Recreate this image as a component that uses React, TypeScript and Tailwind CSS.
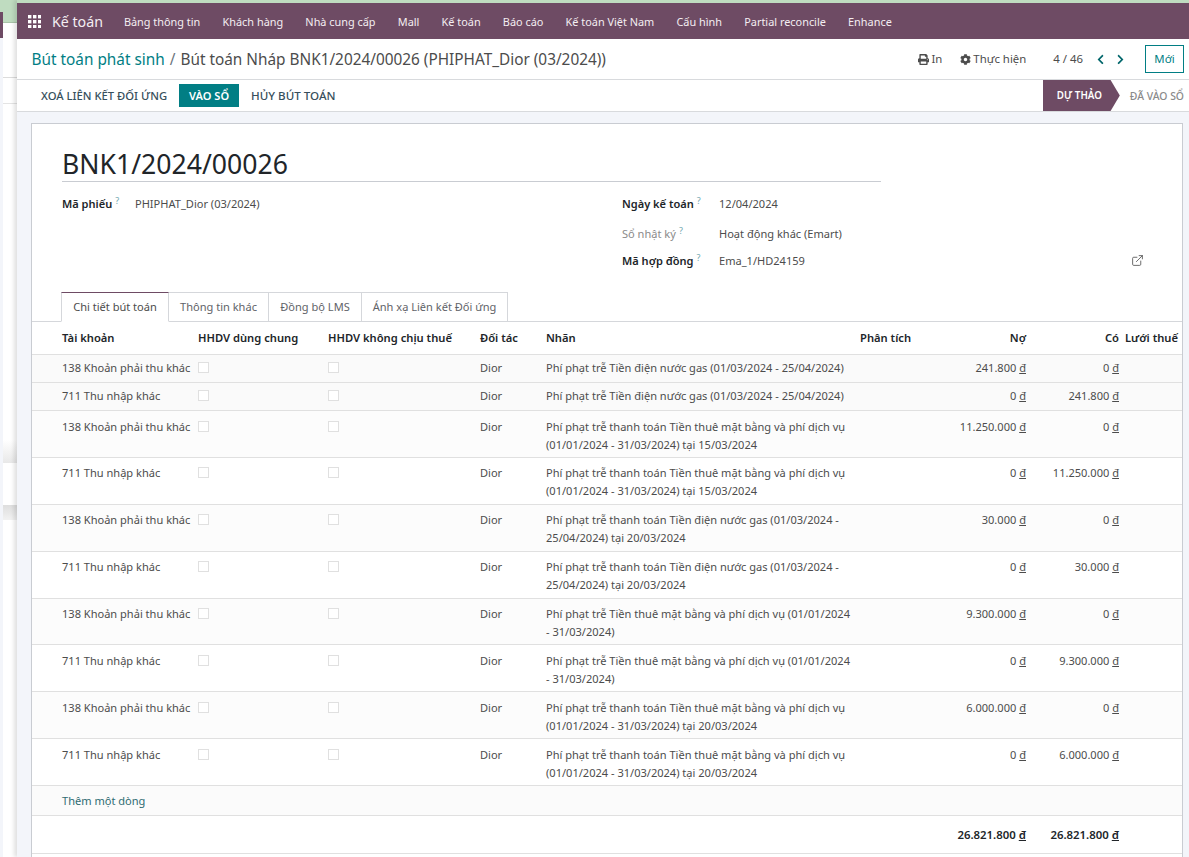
import React from "react";
import { FaPrint, FaCog, FaChevronLeft, FaChevronRight } from "react-icons/fa";
import { ExternalLink } from "lucide-react";

const A = "138 Khoản phải thu khác";
const B = "711 Thu nhập khác";
const L1 = "Phí phạt trễ Tiền điện nước gas (01/03/2024 - 25/04/2024)";
const L2 = "Phí phạt trễ thanh toán Tiền thuê mặt bằng và phí dịch vụ (01/01/2024 - 31/03/2024) tại 15/03/2024";
const L3 = "Phí phạt trễ thanh toán Tiền điện nước gas (01/03/2024 - 25/04/2024) tại 20/03/2024";
const L4 = "Phí phạt trễ Tiền thuê mặt bằng và phí dịch vụ (01/01/2024 - 31/03/2024)";
const L5 = "Phí phạt trễ thanh toán Tiền thuê mặt bằng và phí dịch vụ (01/01/2024 - 31/03/2024) tại 20/03/2024";

const rows: [string, string, string, string][] = [
  [A, L1, "241.800", "0"],
  [B, L1, "0", "241.800"],
  [A, L2, "11.250.000", "0"],
  [B, L2, "0", "11.250.000"],
  [A, L3, "30.000", "0"],
  [B, L3, "0", "30.000"],
  [A, L4, "9.300.000", "0"],
  [B, L4, "0", "9.300.000"],
  [A, L5, "6.000.000", "0"],
  [B, L5, "0", "6.000.000"],
];

const nav = ["Bảng thông tin", "Khách hàng", "Nhà cung cấp", "Mall", "Kế toán", "Báo cáo", "Kế toán Việt Nam", "Cấu hình", "Partial reconcile", "Enhance"];
const tabs: [string, string][] = [
  ["Thông tin khác", "w-[100px]"],
  ["Đồng bộ LMS", "w-[93px]"],
  ["Ánh xạ Liên kết Đối ứng", "w-[146px]"],
];

const Money = ({ v }: { v: string }) => (
  <span>
    {v} <span className="underline">đ</span>
  </span>
);

const Box = () => <span className="block w-[11px] h-[11px] border border-[#e0e0e0] bg-white mt-[3px]" />;

const Field = ({ label, value, muted, w }: { label: string; value: string; muted?: boolean; w: string }) => (
  <div className="flex items-start">
    <div className={`${w} shrink-0 ${muted ? "text-[#8a8a8a]" : "font-semibold text-[#212529]"}`}>
      {label}
      <sup className="text-[#71a7b0] font-normal ml-[3px] text-[9px]">?</sup>
    </div>
    <div className="text-[#4c4c4c]">{value}</div>
  </div>
);

export default function App() {
  return (
    <div className="flex h-[857px] w-[1189px] overflow-hidden bg-white text-[11.05px] leading-[18px] text-[#4c4c4c] font-['Noto_Sans','Open_Sans',sans-serif]">
      <div className="w-[17px] shrink-0 flex">
        <div className="w-[3px] flex flex-col bg-[#f3f5fa]">
          <div className="h-[12px] bg-[#bfdcc0]" />
          <div className="h-[26px] bg-[#6e4b64]" />
        </div>
        <div className="w-[14px] flex flex-col bg-white">
          <div className="h-[23px] bg-[#bfdcc0] border-b border-[#a9c4a9]" />
          <div className="h-[55px] border-b border-[#dcdcdc]" />
          <div className="h-[26px] border-b border-[#e4e4e4]" />
          <div className="h-[336px]" />
          <div className="h-[23px] bg-linear-to-b from-white to-[#e8e8e8]" />
          <div className="h-[42px]" />
          <div className="h-[15px] bg-linear-to-b from-[#dedede] to-[#f2f2f2]" />
        </div>
      </div>
      <div className="relative flex-1 min-w-0 flex flex-col shadow-[-3px_0_4px_rgba(0,0,0,0.12)]">
        <div className="h-[3px] shrink-0 bg-[#bfdcc0]" />
        <header className="h-[36px] bg-[#6e4b64] text-white flex items-center shrink-0">
          <svg className="ml-[11px]" width="13" height="13" viewBox="0 0 13 13" fill="#fff">
            {[0, 5, 10].flatMap((x) => [0, 5, 10].map((y) => <rect key={`${x}-${y}`} x={x} y={y} width="3.4" height="3.4" />))}
          </svg>
          <span className="ml-[11px] mt-[1px] text-[14.2px] text-[#f4eef2]">Kế toán</span>
          <nav className="flex gap-[22.2px] ml-[21px] mt-[1px] text-[#f4eef2] text-[10.9px]">
            {nav.map((n) => (
              <span key={n}>{n}</span>
            ))}
          </nav>
        </header>
        <div className="h-[41px] shrink-0 border-b border-[#d8dadd] flex items-center bg-white text-[11.4px]">
          <div className="ml-[14.5px] flex-1 text-[15.35px] text-[#4c4c4c]">
            <span className="text-[#017e84]">Bút toán phát sinh</span>
            <span className="mx-[5px] text-[#6c757d]">/</span>
            <span>Bút toán Nháp BNK1/2024/00026 (PHIPHAT_Dior (03/2024))</span>
          </div>
          <span className="flex items-center gap-[2px]">
            <FaPrint size={11} />
            In
          </span>
          <span className="flex items-center gap-[2px] ml-[18px]">
            <FaCog size={11} />
            Thực hiện
          </span>
          <span className="ml-[27px]">4 / 46</span>
          <FaChevronLeft className="ml-[12px] text-[#01666b]" size={11} />
          <FaChevronRight className="ml-[9px] text-[#01666b]" size={11} />
          <span className="ml-[19px] mr-[5px] w-[39px] h-[28px] border border-[#017e84] text-[#017e84] flex items-center justify-center">Mới</span>
        </div>
        <div className="h-[32px] shrink-0 border-b border-[#d8dadd] flex items-center bg-white pl-[24px] font-medium">
          <span className="text-[#374f5c] text-[11.25px]">XOÁ LIÊN KẾT ĐỐI ỨNG</span>
          <span className="ml-[12px] h-[23px] w-[60px] justify-center bg-[#017e84] text-white flex items-center font-semibold">VÀO SỔ</span>
          <span className="ml-[12px] text-[#374f5c] text-[11.6px]">HỦY BÚT TOÁN</span>
          <div className="ml-auto flex items-center h-[31px] text-[10.4px]">
            <span className="h-full w-[77px] pl-[14px] bg-[#6e4b64] text-white font-semibold text-[9.8px] flex items-center [clip-path:polygon(0_0,88%_0,100%_50%,88%_100%,0_100%)]">
              DỰ THẢO
            </span>
            <span className="ml-[10px] pr-[5px] text-[#8a8a8a]">ĐÃ VÀO SỔ</span>
          </div>
        </div>
        <main className="flex-1 min-h-0 bg-[#f3f5fa] pl-[14px] pr-[6px] pt-[11px]">
          <div className="bg-white border border-[#c9ccd2] h-[745px]">
            <div className="pl-[30px] pt-[21px]">
              <div className="w-[819px] h-[37px] border-b border-[#c9ccd2] text-[26.6px] leading-[38px] text-[#212529]">BNK1/2024/00026</div>
            </div>
            <div className="flex pl-[30px] pt-[13px] h-[110px]">
              <div className="w-[560px]">
                <Field label="Mã phiếu" value="PHIPHAT_Dior (03/2024)" w="w-[73px]" />
              </div>
              <div className="flex-1 flex flex-col pr-[38px]">
                <Field label="Ngày kế toán" value="12/04/2024" w="w-[97px]" />
                <div className="mt-[12px]">
                  <Field label="Sổ nhật ký" value="Hoạt động khác (Emart)" muted w="w-[97px]" />
                </div>
                <div className="mt-[9px] relative">
                  <Field label="Mã hợp đồng" value="Ema_1/HD24159" w="w-[97px]" />
                  <ExternalLink className="absolute right-0 top-[2px]" size={13} strokeWidth={1.5} />
                </div>
              </div>
            </div>
            <div className="flex pl-[29px] h-[30px] border-b border-[#d5d7db]">
              <span className="h-[30px] w-[108px] justify-center flex items-center bg-white border border-[#d5d7db] border-b-white border-t-[#6e4b64]">Chi tiết bút toán</span>
              {tabs.map(([t, w]) => (
                <span key={t} className={`${w} h-[29px] justify-center flex items-center border-t border-r border-[#d5d7db] text-[#5f6368]`}>
                  {t}
                </span>
              ))}
            </div>
            <table className="w-full table-fixed border-collapse">
              <colgroup>
                <col className="w-[166px]" />
                <col className="w-[130px]" />
                <col className="w-[152px]" />
                <col className="w-[66px]" />
                <col className="w-[314px]" />
                <col className="w-[72px]" />
                <col className="w-[94px]" />
                <col className="w-[93px]" />
                <col />
              </colgroup>
              <thead>
                <tr className="h-[32px] font-semibold text-[#212529] border-b border-[#e0e0e0] text-[11.2px]">
                  <th className="pl-[30px] text-left font-semibold">Tài khoản</th>
                  <th className="text-left font-semibold">HHDV dùng chung</th>
                  <th className="text-left font-semibold">HHDV không chịu thuế</th>
                  <th className="text-left font-semibold">Đối tác</th>
                  <th className="text-left font-semibold">Nhãn</th>
                  <th className="text-left font-semibold">Phân tích</th>
                  <th className="text-right font-semibold">Nợ</th>
                  <th className="text-right font-semibold">Có</th>
                  <th className="text-right font-semibold pr-[4px] whitespace-nowrap">Lưới thuế</th>
                </tr>
              </thead>
              <tbody>
                {rows.map(([acc, label, debit, credit], i) => {
                  const pad = i < 2 ? "pt-[4.5px] pb-[4.75px]" : "pt-[6.5px] pb-[3.4px]";
                  return (
                    <tr key={i} className={`border-b border-[#e0e0e0] align-top ${i < 2 ? "bg-[#fafafa]" : i % 2 === 0 ? "bg-[#fcfcfc]" : "bg-white"}`}>
                      <td className={`pl-[30px] whitespace-nowrap ${pad}`}>{acc}</td>
                      <td className={pad}><Box /></td>
                      <td className={pad}><Box /></td>
                      <td className={pad}>Dior</td>
                      <td className={`pr-[8px] ${pad}`}>{label}</td>
                      <td />
                      <td className={`text-right ${pad}`}><Money v={debit} /></td>
                      <td className={`text-right ${pad}`}><Money v={credit} /></td>
                      <td />
                    </tr>
                  );
                })}
                <tr className="h-[30px] bg-[#fbfbfb] border-b border-[#e0e0e0]">
                  <td colSpan={9} className="pl-[30px] pt-[1px] text-[#2f6b72]">Thêm một dòng</td>
                </tr>
                <tr className="h-[38px] border-b border-[#e0e0e0] font-semibold text-[#212529] text-[11.4px]">
                  <td colSpan={6} />
                  <td className="text-right pt-[1px]"><Money v="26.821.800" /></td>
                  <td className="text-right pt-[1px]"><Money v="26.821.800" /></td>
                  <td />
                </tr>
              </tbody>
            </table>
          </div>
        </main>
      </div>
    </div>
  );
}
